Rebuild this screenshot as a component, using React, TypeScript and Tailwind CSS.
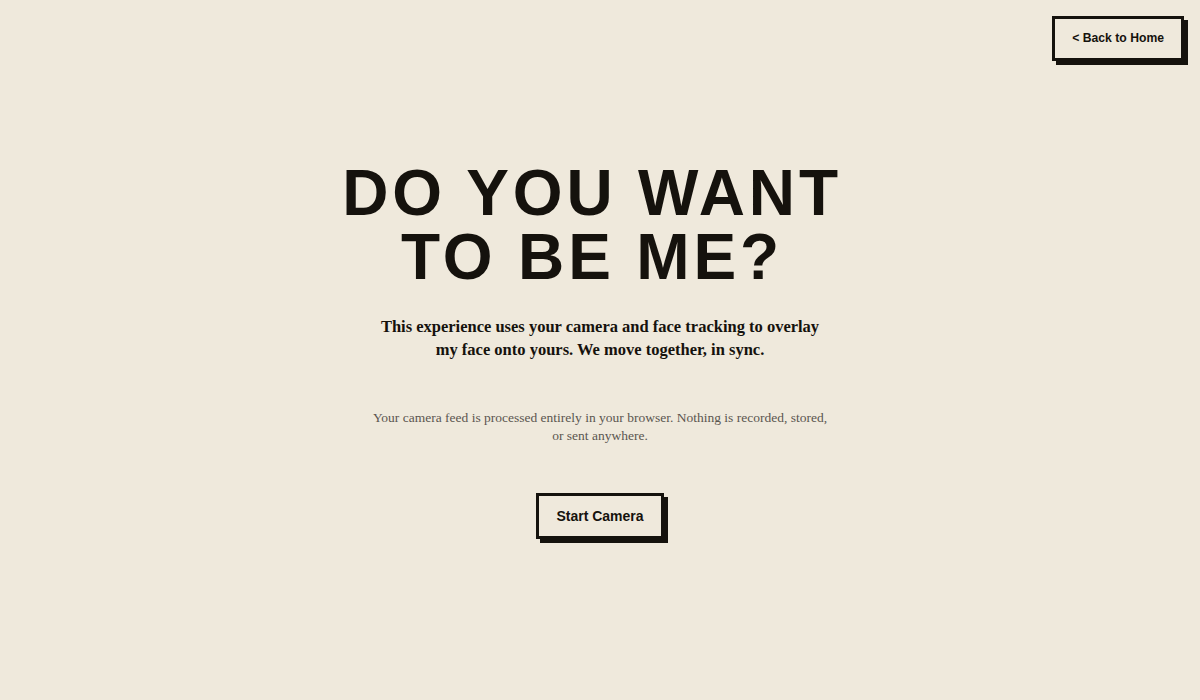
export default function App() {
  return (
    <div className="relative h-[700px] w-full bg-[#efe9dc] text-[#15120d] flex flex-col items-center justify-center">
      {/* back link, pinned over the corner */}
      <button className="absolute top-4 right-4 border-[3px] border-[#15120d] bg-[#efe9dc] px-[17px] py-[11px] text-[12.2px] leading-[17px] font-bold shadow-[4px_4px_0_#15120d] font-['Liberation_Sans',Arial,sans-serif]">
        &lt; Back to Home
      </button>

      <h1 className="mr-[16px] text-center text-[64px] leading-[64px] font-bold tracking-[0.06em] font-['Liberation_Sans',Arial,sans-serif]">
        <span className="block">DO YOU WANT</span>
        <span className="block">TO BE ME?</span>
      </h1>

      <p className="mt-[26px] w-[450px] text-center text-[16.5px] leading-[23px] font-bold font-['Liberation_Serif','Times_New_Roman',serif]">
        This experience uses your camera and face tracking to overlay my face onto yours. We move together, in sync.
      </p>

      <p className="mt-[48px] w-[468px] text-center text-[13.5px] leading-[18px] text-[#5b5650] font-['Liberation_Serif','Times_New_Roman',serif]">
        Your camera feed is processed entirely in your browser. Nothing is recorded, stored, or sent anywhere.
      </p>

      <button className="mt-[48px] border-[3px] border-[#15120d] bg-[#efe9dc] px-[17px] py-[11px] text-[14px] leading-[18px] font-bold shadow-[4px_4px_0_#15120d] font-['Liberation_Sans',Arial,sans-serif]">
        Start Camera
      </button>
    </div>
  );
}
